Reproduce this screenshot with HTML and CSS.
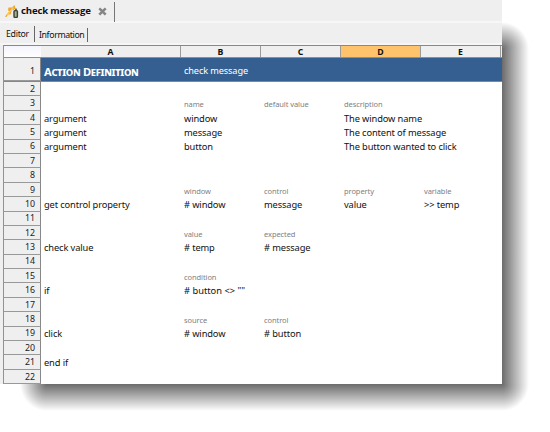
FILE: index.html
```html
<!DOCTYPE html>
<html lang="en">
<head>
<meta charset="utf-8">
<title>check message</title>
<link rel="stylesheet" href="styles.css">
</head>
<body>
<div class="stage">
<main class="window">
  <header class="filebar">
    <div class="file-tab">
      <svg class="logo" viewBox="0 0 14 14" width="14" height="14">
        <path d="M0 11.5 4.5 6 3 5.5 3.5 2.5 7 2.5 9.5 0 10.5 3.5 8.5 5 7 4.5 5.5 9.5 3 9.5 1.5 12Z" fill="#f5a421"/>
        <path d="M2 10.5 5 6.5 8.5 2.5" fill="none" stroke="#ffc95c" stroke-width="1.3"/>
        <rect x="9" y="5.6" width="3.4" height="6.8" rx=".8" fill="#a7b091" stroke="#39402f" stroke-width="1.4"/>
        <path d="M10 4.2h2" stroke="#39402f"/>
      </svg>
      <span class="file-name">check message</span>
      <svg class="close" viewBox="0 0 9 9" width="9" height="9"><path d="m1.3 1.3 6.4 6.4m0-6.4L1.3 7.7" stroke="#858585" stroke-width="2.5"/></svg>
    </div>
  </header>
  <nav class="views"><span class="view active">Editor</span><span class="view info">Information</span></nav>
  <section class="sheet">
    <div class="cols"><i class="corner"></i><b>A</b><b>B</b><b>C</b><b class="selected">D</b><b>E</b><b></b></div>
    <div class="row title"><span class="num">1</span><span class="heading">Action Definition</span><span class="sub">check message</span></div>
    <div class="row"><span class="num">2</span></div>
    <div class="row hint"><span class="num">3</span><span></span><span>name</span><span>default value</span><span>description</span></div>
    <div class="row"><span class="num">4</span><span>argument</span><span>window</span><span></span><span>The window name</span></div>
    <div class="row"><span class="num">5</span><span>argument</span><span>message</span><span></span><span>The content of message</span></div>
    <div class="row"><span class="num">6</span><span>argument</span><span>button</span><span></span><span>The button wanted to click</span></div>
    <div class="row"><span class="num">7</span></div>
    <div class="row"><span class="num">8</span></div>
    <div class="row hint"><span class="num">9</span><span></span><span>window</span><span>control</span><span>property</span><span>variable</span></div>
    <div class="row"><span class="num">10</span><span>get control property</span><span># window</span><span>message</span><span>value</span><span>&gt;&gt; temp</span></div>
    <div class="row"><span class="num">11</span></div>
    <div class="row hint"><span class="num">12</span><span></span><span>value</span><span>expected</span></div>
    <div class="row"><span class="num">13</span><span>check value</span><span># temp</span><span># message</span></div>
    <div class="row"><span class="num">14</span></div>
    <div class="row hint"><span class="num">15</span><span></span><span>condition</span></div>
    <div class="row"><span class="num">16</span><span>if</span><span class="expr"># button &lt;&gt; ""</span></div>
    <div class="row"><span class="num">17</span></div>
    <div class="row hint"><span class="num">18</span><span></span><span>source</span><span>control</span></div>
    <div class="row"><span class="num">19</span><span>click</span><span># window</span><span># button</span></div>
    <div class="row"><span class="num">20</span></div>
    <div class="row"><span class="num">21</span><span>end if</span></div>
    <div class="row"><span class="num">22</span></div>
  </section>
</main>
<div class="shade-right"></div>
<div class="shade-bottom"></div>
<div class="shade-corner"></div>
</div>
</body>
</html>
```
FILE: styles.css
```css
* { box-sizing: border-box; }
body { margin: 0; background: #fff; overflow: hidden; color: #111; font-family: "Noto Sans", "Open Sans", sans-serif; }
.stage { display: grid; grid-template-columns: 502px 27px; grid-template-rows: 384px 27px; }
.window { height: 384px; background: #efefef; overflow: hidden; }
.filebar { display: flex; height: 23px; border-bottom: 2px solid #f7f7f7; padding-left: 2px; }
.file-tab { width: 113px; height: 20px; margin-top: 2px; padding-left: 3px; display: flex; align-items: center; border-right: 1px solid #777; }
.logo { flex: none; margin-top: -1px; }
.file-name { width: 70px; margin: -2px 0 0 2px; font: bold 9.6px/18px "Open Sans", sans-serif; white-space: nowrap; letter-spacing: -.16px; }
.close { flex: none; margin: -1px 0 0 7px; }
.views { height: 22px; padding: 3px 0 0 3px; display: flex; border-bottom: 2px solid #f6f6f6; font-size: 8.8px; line-height: 16px; }
.view { height: 16px; border-right: 1px solid #666; white-space: nowrap; }
.active { width: 32px; padding-left: 3px; letter-spacing: -.3px; }
.info { width: 53px; height: 14px; margin-top: 2px; padding-left: 4px; letter-spacing: -.4px; line-height: 14px; }
.sheet { margin-left: 3px; height: 339px; background: #fff; border-left: 1px solid #929292; }
.cols, .row { display: grid; grid-template-columns: 37px 140px 80px 80px 80px 80px 1fr; grid-template-rows: 100%; }
.cols { height: 13px; border-top: 1px solid #888; background: #efefef; border-bottom: 1px solid #8a8f96; }
.cols b { border-right: 1px solid #9b9b9b; text-align: center; font: bold 8.7px/12px "Open Sans", sans-serif; }
.cols b:last-child { border: 0; }
.corner { background: linear-gradient(#f4f4fc, #fff); }
.cols .selected { background: #ffc36b; }
.row { height: 14.4px; line-height: 14px; font-size: 9.3px; letter-spacing: -.12px; white-space: nowrap; }
.row > span { padding: .8px 0 0 3px; }
.row > .expr { letter-spacing: 0; }
.row > .num { padding: .8px 5px 0 0; text-align: right; color: #222; background: #efefef; border-right: 1px solid #888; border-bottom: 1px solid #999; font-size: 8.8px; line-height: 13.6px; letter-spacing: 0; }
.hint { color: #808080; font-size: 7.5px; letter-spacing: -.08px; }
.title { height: 24px; line-height: 24px; background: #355f91; color: #fff; border-bottom: 1px solid #6e8cae; }
.title > .sub { font-size: 9.2px; }
.title > .num { line-height: 24px; }
.row > .heading { font-weight: bold; font-size: 11.2px; font-variant: small-caps; letter-spacing: -.33px; padding-top: 1.5px; }
.shade-right { margin-top: 22px; background: radial-gradient(circle 27px at 0 27px, #6b6b6b, #fff) 0 0 / 27px 27px no-repeat, linear-gradient(90deg, #6b6b6b, #fff) 0 27px / 27px 100% no-repeat; }
.shade-bottom { margin-left: 20px; background: radial-gradient(circle 27px at 27px 0, #6b6b6b, #fff) 0 0 / 27px 27px no-repeat, linear-gradient(#6b6b6b, #fff) 27px 0 / 100% 27px no-repeat; }
.shade-corner { background: radial-gradient(circle 27px at 0 0, #6b6b6b, #fff); }
```
